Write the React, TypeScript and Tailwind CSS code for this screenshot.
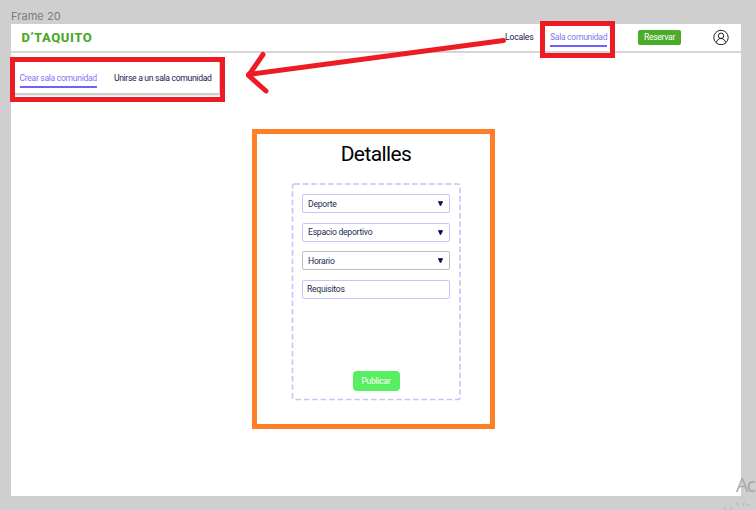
import type { ReactNode } from "react";

function Select({ label, gray }: { label: string; gray?: boolean }) {
  return (
    <div
      className={`flex h-[19px] items-center justify-between rounded-[2px] border pr-[6px] pl-[5px] ${
        gray ? "border-[#bdbdbd]" : "border-[#c9c2fb]"
      }`}
    >
      <span>{label}</span>
      <svg width="5" height="5" viewBox="0 0 5 5">
        <path d="M0 .3h5L2.9 4.8h-.8z" fill="#0b0652" stroke="#0b0652" strokeWidth=".3" />
      </svg>
    </div>
  );
}

function Tab({ children }: { children: ReactNode }) {
  return (
    <span className="border-b-2 border-[#6c63ff] text-[#7f78f5]">{children}</span>
  );
}

export default function App() {
  return (
    <div className="relative flex h-[510px] w-[756px] flex-col overflow-hidden bg-[#cfcfcf] pl-[11px] font-[Roboto,sans-serif] text-[8.6px] leading-[10px] tracking-[-0.31px] text-[#1b1650]">
      <div className="h-6 pt-[9px] font-[Inter,sans-serif] text-[11px] leading-[14px] tracking-[0.05px] text-[#7c7c7c]">
        Frame 20
      </div>
      <main className="flex h-[472px] w-[730px] flex-col bg-white">
        <header className="flex h-[29px] shrink-0 items-start border-b-2 border-[#d6d6d6] pl-[10.5px]">
          <h1 className="w-[483.5px] pt-[6px] text-[13px] leading-[15px] font-extrabold tracking-[0.55px] text-[#49a929]">
            D’TAQUITO
          </h1>
          <span className="mt-2 w-[45px] tracking-[-0.2px]">Locales</span>
          <div className="flex h-[23px] w-[88px] items-stretch pt-2">
            <Tab>Sala comunidad</Tab>
          </div>
          <button className="mt-[6px] h-[15px] w-[43px] rounded-[2px] bg-[#4aac28] pb-px text-white">
            Reservar
          </button>
          <svg className="mt-[5px] ml-8" width="16" height="16" viewBox="0 0 16 16" fill="none" stroke="#222" strokeWidth="1">
            <circle cx="8" cy="8.500" r="7.2" />
            <circle cx="8" cy="6.800" r="2.7" />
            <path d="M3.500 13.700c.2-2.500 2-4.200 4.500-4.200s4.300 1.700 4.500 4.200" />
          </svg>
        </header>
        <nav className="mt-[6px] flex h-[35px] w-[208px] shrink-0 items-start gap-[17px] border-b border-[#cccccc] pt-[14px] pl-[8.5px] shadow-[1px_1px_2px_#bbb]">
          <div className="flex h-[15px]">
            <Tab>Crear sala comunidad</Tab>
          </div>
          <span>Unirse a un sala comunidad</span>
        </nav>
        <section className="ml-[281px] flex w-[168px] flex-col items-center pt-[48px]">
          <h2 className="text-[21px] leading-6 tracking-[-0.6px] text-black">Detalles</h2>
          <form className="relative mt-[18px] flex h-[216px] w-[168px] flex-col gap-[9.67px] px-[10px] pt-[10px] tracking-[-0.25px] text-[#1a2a55]">
            <svg className="absolute top-[-1px] left-[-1px]" width="170" height="218" fill="none">
              <rect x="1.500" y="1" width="167.500" height="215.500" rx="2" stroke="#c9c1fb" strokeWidth="1.6" strokeDasharray="5.6 2.8" />
            </svg>
            <Select label="Deporte" />
            <Select label="Espacio deportivo" />
            <Select label="Horario" gray />
            <div className="flex h-[19px] items-center rounded-[2px] border border-[#c9c2fb] pl-1">Requisitos</div>
            <button type="button" className="mt-[62px] h-5 w-[47px] self-center rounded-[4px] bg-[#58ee62] text-white">
              Publicar
            </button>
          </form>
        </section>
      </main>
      <div className="absolute top-[472px] left-[736px] font-['Open_Sans',sans-serif] text-[19.5px] leading-[26px] tracking-[-1.5px] whitespace-nowrap text-[#a9a9a9]">
        Ac
      </div>
      <svg className="absolute top-[501px] left-[722px]" width="34" height="9" fill="none" stroke="#b4b4b4">
        <path d="M2 6l2 3M10 6l-2 3M14.500 1l2 4M22.500 1l-2 4M24.500 4h4" />
      </svg>
      <div className="absolute top-[57px] left-[10px] h-[45px] w-[215px] border-[5px] border-[#ed1c24]" />
      <div className="absolute top-[21px] left-[540px] h-[37px] w-[75px] border-[5px] border-[#ed1c24]" />
      <div className="absolute top-[129px] left-[252px] h-[300px] w-[243px] border-[5px] border-[#ff7f27]" />
      <svg className="absolute inset-0" width="756" height="510" fill="none" stroke="#ed1c24" strokeWidth="5" strokeLinecap="round" strokeLinejoin="round">
        <path d="M503.500 40.500 248.500 74.500M263 54.500 248.500 75.500 266 91" />
      </svg>
    </div>
  );
}
